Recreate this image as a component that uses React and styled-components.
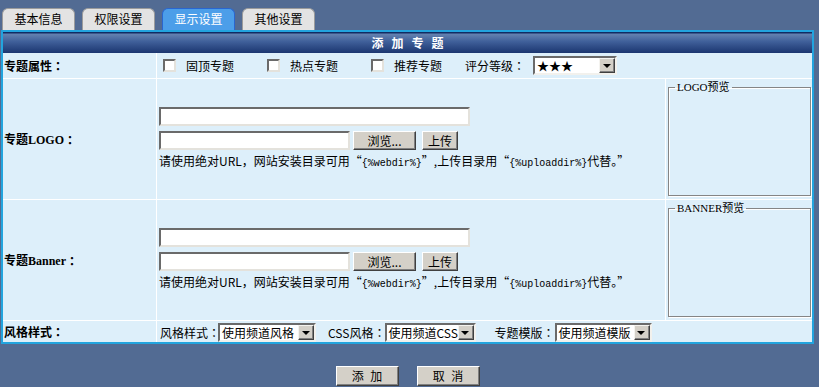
import React from 'react';
import styled, { createGlobalStyle } from 'styled-components';

const GlobalStyle = createGlobalStyle`
  html, body {
    margin: 0;
    padding: 0;
    background: #526b93;
  }
  body {
    font-family: "Noto Sans CJK SC", "Liberation Sans", sans-serif;
    font-size: 12px;
    color: #000;
  }
`;

const cjk = `"Noto Sans CJK SC", "Liberation Sans", sans-serif`;
const serifCjk = `"Liberation Serif", "Noto Sans CJK SC", serif`;

const Tabs = styled.div`
  display: flex;
  gap: 7px;
  padding: 8px 0 0 2px;
  height: 22px;
`;

const Tab = styled.div`
  width: 73px;
  height: 22px;
  box-sizing: border-box;
  display: flex;
  align-items: center;
  justify-content: center;
  border: 1px solid ${p => (p.$active ? '#2a66cf' : '#9b9b9b')};
  border-bottom: none;
  border-radius: 6px 6px 0 0;
  background: ${p => (p.$active ? '#4c9ee9' : '#e3e3e3')};
  color: ${p => (p.$active ? '#fff' : '#000')};
  font-size: 12px;
  line-height: 14px;
  padding-bottom: 1px;
`;

const Panel = styled.div`
  width: 813px;
  box-sizing: border-box;
  margin-left: 1px;
  border: 2px solid #22a4de;
  background: #fff;
`;

const TitleBar = styled.div`
  height: 21px;
  display: flex;
  align-items: center;
  justify-content: center;
  background: linear-gradient(#112b62 0, #112b62 1px, #6482b0 2px, #40609a 45%, #1b3670 100%);
  color: #fff;
  font-weight: bold;
  font-size: 12px;
  letter-spacing: 8px;
  padding-left: 8px;
`;

const Grid = styled.div`
  display: grid;
  grid-template-columns: 153px 508px 146px;
  grid-template-rows: 25px 120px 120px 21px;
  column-gap: 1px;
  row-gap: 1px;
  background: #fff;
`;

const Cell = styled.div`
  background: #ddeffa;
  display: flex;
  align-items: center;
  min-width: 0;
  grid-column: ${p => p.$span || 'auto'};
`;

const LabelCell = styled(Cell)`
  padding-left: 1px;
  font-family: ${serifCjk};
  font-weight: bold;
  font-size: 12px;
`;

// centred full-width colon, as in the reference font
const Colon = styled.span`
  font-family: "Noto Sans CJK TC", "Noto Sans CJK SC", sans-serif;
`;

const CheckRow = styled(Cell)`
  padding-left: 6px;
`;

const Check = styled.input.attrs({ type: 'checkbox' })`
  appearance: none;
  margin: 0 10px 0 0;
  width: 13px;
  height: 13px;
  box-sizing: border-box;
  background: #fff;
  border: 2px solid;
  border-color: #6a6a6a #e4e2dc #e4e2dc #6a6a6a;
`;

const CheckLabel = styled.span`
  margin-right: ${p => p.$gap}px;
  line-height: 14px;
`;

const SelectBox = styled.div`
  display: inline-flex;
  align-items: center;
  width: ${p => p.$w}px;
  height: 19px;
  box-sizing: border-box;
  background: #fff;
  border: 2px solid;
  border-color: #6a6a6a #f2f1ed #f2f1ed #6a6a6a;
  margin-left: ${p => p.$ml || 0}px;
  flex-shrink: 0;
`;

const SelectText = styled.span`
  flex: 1;
  padding-left: 2px;
  white-space: nowrap;
  font-family: ${cjk};
  font-size: 12px;
  line-height: 15px;
`;

const SelectArrow = styled.span`
  width: 16px;
  height: 15px;
  flex-shrink: 0;
  box-sizing: border-box;
  background: #d4d0c8;
  border: 1px solid;
  border-color: #f4f3ef #404040 #404040 #f4f3ef;
  box-shadow: inset -1px -1px 0 #808080;
  display: flex;
  align-items: center;
  justify-content: center;
  &::after {
    content: '';
    border-left: 4px solid transparent;
    border-right: 4px solid transparent;
    border-top: 4px solid #000;
    margin: 1px 1px 0 0;
  }
`;

const Select = ({ w, ml, children }) => (
  <SelectBox $w={w} $ml={ml}>
    <SelectText>{children}</SelectText>
    <SelectArrow />
  </SelectBox>
);

const UploadCell = styled(Cell)`
  padding-left: 2px;
`;

const UploadBlock = styled.div`
  display: flex;
  flex-direction: column;
  gap: 5px;
`;

const InputRow = styled.div`
  display: flex;
  align-items: center;
`;

const TextInput = styled.input.attrs({ type: 'text' })`
  width: ${p => p.$w}px;
  height: 19px;
  box-sizing: border-box;
  margin: 0;
  padding: 0 2px;
  background: #fff;
  border: 2px solid;
  border-color: #6a6a6a #e4e2dc #e4e2dc #6a6a6a;
  outline: none;
`;

const Button = styled.button`
  width: ${p => p.$w}px;
  height: ${p => p.$h || 19}px;
  margin: 0 0 0 ${p => p.$ml || 0}px;
  padding: 0;
  box-sizing: border-box;
  background: #d4d0c8;
  border: 1px solid;
  border-color: #fff #404040 #404040 #fff;
  box-shadow: inset -1px -1px 0 #808080;
  font-family: ${cjk};
  font-size: 12px;
  line-height: 14px;
  word-spacing: ${p => p.$ws || 0}px;
  color: #000;
`;

const Hint = styled.div`
  white-space: nowrap;
  line-height: 14px;
  margin-top: -1px;
`;

const Code = styled.span`
  font-family: "Liberation Mono", monospace;
  font-size: 10px;
`;

const PreviewCell = styled(Cell)`
  align-items: stretch;
`;

const Preview = styled.fieldset`
  flex: 1;
  margin: 2px 1px 3px 2px;
  padding: 0;
  border: 1px solid #858585;
  box-shadow: 1px 1px 0 #fff, inset 1px 1px 0 #fff;
  min-width: 0;
`;

const PreviewLegend = styled.legend`
  margin-left: 6px;
  padding: 0 2px;
  font-family: ${serifCjk};
  font-size: 11px;
  line-height: 12px;
`;

const StyleRow = styled(Cell)`
  padding-left: 3px;
  align-items: flex-end;
`;

const FieldLabel = styled.span`
  line-height: 19px;
  margin-left: ${p => p.$ml || 0}px;
  white-space: nowrap;
`;

const Actions = styled.div`
  width: 813px;
  margin-left: 1px;
  display: flex;
  justify-content: center;
  gap: 18px;
  padding-top: 22px;
`;

const UploadRow = ({ title, preview }) => (
  <>
    <LabelCell>{title}<Colon>：</Colon></LabelCell>
    <UploadCell>
      <UploadBlock>
        <TextInput $w={311} />
        <InputRow>
          <TextInput $w={191} />
          <Button $w={63} $ml={3}>浏览...</Button>
          <Button $w={36} $ml={6}>上传</Button>
        </InputRow>
        <Hint>
          请使用绝对URL，网站安装目录可用“<Code>{'{%webdir%}'}</Code>”,上传目录用“<Code>{'{%uploaddir%}'}</Code>代替。”
        </Hint>
      </UploadBlock>
    </UploadCell>
    <PreviewCell>
      <Preview>
        <PreviewLegend>{preview}</PreviewLegend>
      </Preview>
    </PreviewCell>
  </>
);

export default function App() {
  return (
    <>
      <GlobalStyle />
      <Tabs>
        <Tab>基本信息</Tab>
        <Tab>权限设置</Tab>
        <Tab $active>显示设置</Tab>
        <Tab>其他设置</Tab>
      </Tabs>
      <Panel>
        <TitleBar>添加专题</TitleBar>
        <Grid>
          <LabelCell>专题属性<Colon>：</Colon></LabelCell>
          <CheckRow $span="2 / 4">
            <Check />
            <CheckLabel $gap={33}>固顶专题</CheckLabel>
            <Check />
            <CheckLabel $gap={33}>热点专题</CheckLabel>
            <Check />
            <CheckLabel $gap={23}>推荐专题</CheckLabel>
            <span>评分等级<Colon>：</Colon></span>
            <Select w={84} ml={8}>★★★</Select>
          </CheckRow>

          <UploadRow title="专题LOGO" preview="LOGO预览" />
          <UploadRow title="专题Banner" preview="BANNER预览" />

          <LabelCell>风格样式<Colon>：</Colon></LabelCell>
          <StyleRow $span="2 / 4">
            <FieldLabel>风格样式<Colon>：</Colon></FieldLabel>
            <Select w={98} ml={-2}>使用频道风格</Select>
            <FieldLabel $ml={12}>CSS风格<Colon>：</Colon></FieldLabel>
            <Select w={91} ml={-1}>使用频道CSS</Select>
            <FieldLabel $ml={19}>专题模版<Colon>：</Colon></FieldLabel>
            <Select w={97} ml={0}>使用频道模版</Select>
          </StyleRow>
        </Grid>
      </Panel>
      <Actions>
        <Button $w={63} $h={20} $ws={4}>添 加</Button>
        <Button $w={63} $h={20} $ws={4}>取 消</Button>
      </Actions>
    </>
  );
}
